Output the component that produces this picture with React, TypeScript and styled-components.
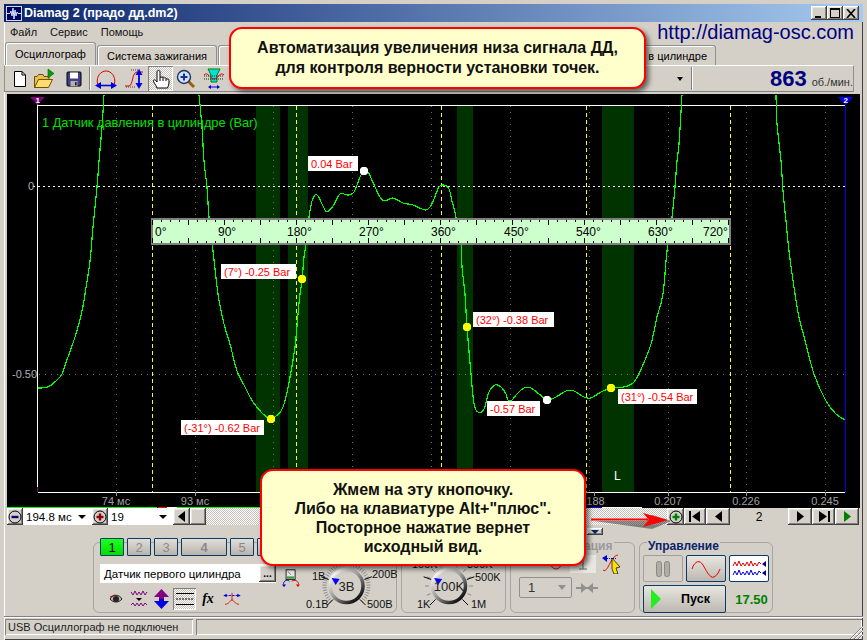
import React from "react";
import styled, { createGlobalStyle, css } from "styled-components";

const Global = createGlobalStyle`
  html, body { margin: 0; padding: 0; background: #d4d0c8; }
  body { font-family: "Liberation Sans", Arial, sans-serif; font-size: 11px; color: #000; }
`;

const raised = css`
  box-shadow: inset -1px -1px #404040, inset 1px 1px #fff, inset -2px -2px #808080, inset 2px 2px #e8e6e0;
`;
const sunken = css`
  box-shadow: inset 1px 1px #808080, inset -1px -1px #fff;
`;
const checker = css`
  background: repeating-conic-gradient(#fff 0 25%, #c4c0b8 0 50%) 0 0 / 2px 2px;
`;

const Window = styled.div`
  position: relative; width: 867px; height: 640px; box-sizing: border-box; overflow: hidden;
  display: flex; flex-direction: column; background: #d4d0c8; border: 4px solid #d4d0c8;
  border-bottom: 0;
  box-shadow: inset 1px 1px #fff, inset -1px -1px #404040;
`;
const TitleBar = styled.div`
  height: 18px; flex: none; display: flex; align-items: center; padding: 0 2px;
  background: linear-gradient(90deg, #0a246a, #a6caf0);
  color: #fff; font-weight: bold; font-size: 12.5px;
`;
const TitleText = styled.span`margin-left: 2px; flex: 1; white-space: nowrap;`;
const CaptionBtn = styled.div<{ $mr?: number }>`
  width: 16px; height: 14px; ${raised}; background: #d4d0c8; display: flex; align-items: center; justify-content: center;
  margin-right: ${p => p.$mr ?? 0}px;
`;
const MenuBar = styled.div`
  height: 20px; flex: none; display: flex; align-items: center; padding-left: 6px; gap: 13px; position: relative;
`;
const MenuItem = styled.span`font-size: 11px; color: #111;`;
const Url = styled.span`
  margin-left: auto; margin-right: 9px; font-size: 20px; color: #000080; white-space: nowrap;
`;
const TabRow = styled.div`height: 23px; flex: none; display: flex; align-items: flex-end; padding-left: 1px;`;
const Tab = styled.div<{ $w: number; $active?: boolean; $end?: boolean }>`
  width: ${p => p.$w}px; box-sizing: border-box; height: ${p => (p.$active ? 23 : 20)}px;
  margin-right: 1px; padding-right: ${p => (p.$end ? 8 : 0)}px; display: flex; align-items: center; justify-content: ${p => (p.$end ? "flex-end" : "center")};
  background: #d4d0c8; border: 1px solid #909090; border-bottom: 0; border-radius: 3px 3px 0 0;
  box-shadow: inset 1px 1px #fff; font-size: 11px; white-space: nowrap; overflow: hidden;
`;
const Toolbar = styled.div`
  height: 27px; width: 850px; flex: none; box-sizing: border-box; display: flex; align-items: center;
  padding-left: 2px; border: 1px solid #909090; border-top-color: #fff; border-bottom: 1px solid #808080;
`;
const ToolBtn = styled.div<{ $ml?: number; $on?: boolean }>`
  width: 25px; height: 25px; flex: none; margin-left: ${p => p.$ml ?? 0}px;
  display: flex; align-items: center; justify-content: center;
  ${p => p.$on && css`${checker}; box-shadow: inset 1px 1px #808080, inset -1px -1px #fff;`}
`;
const ToolSep = styled.div<{ $ml: number; $mr?: number }>`
  width: 2px; height: 23px; flex: none; background: linear-gradient(90deg, #808080 50%, #fff 50%);
  margin-left: ${p => p.$ml}px; margin-right: ${p => p.$mr ?? 0}px;
`;
const Caret = styled.span`
  margin-left: auto; width: 0; height: 0; border: 3px solid transparent; border-top: 4px solid #000; border-bottom: 0; margin-right: 8px;
`;
const RpmBox = styled.div`
  width: 160px; flex: none; display: flex; align-items: baseline; justify-content: flex-end;
`;
const RpmValue = styled.b`font-size: 22px; color: #000080; margin-right: 5px;`;
const RpmUnit = styled.span`font-size: 11px; color: #333;`;

const ChartWrap = styled.div`
  flex: none; height: 414px; margin: 2px 0 0 3px; width: 853px; background: #000;
`;
const ChartSvg = styled.svg`display: block; font-family: "Liberation Sans", Arial, sans-serif;`;
const ChartText = styled.text<{ $c: string; $s?: number }>`
  fill: ${p => p.$c}; font-size: ${p => p.$s ?? 11}px;
`;

const ScrollRow = styled.div`
  height: 18px; flex: none; margin-left: 3px; width: 855px; display: flex; align-items: stretch;
`;
const NavBtn = styled.div<{ $w: number }>`
  width: ${p => p.$w}px; height: 17px; flex: none; background: #d4d0c8; ${raised};
  display: flex; align-items: center; justify-content: center;
`;
const Combo = styled.div<{ $w: number }>`
  width: ${p => p.$w}px; height: 17px; flex: none; box-sizing: border-box; background: #fff; display: flex; align-items: center;
  padding: 0 6px 0 3px; font-size: 11.5px; justify-content: space-between;
`;
const ComboCaret = styled.span`
  width: 0; height: 0; border: 4px solid transparent; border-top: 4px solid #000; border-bottom: 0;
`;
const Track = styled.div<{ $w: number }>`
  width: ${p => p.$w}px; height: 17px; flex: none; ${checker};
`;
const PageField = styled.div`
  width: 58px; height: 17px; flex: none; display: flex; align-items: center; justify-content: center; font-size: 12px; background: #d4d0c8;
`;
const Collapse = styled.div`
  position: absolute; left: 583px; top: 524px; width: 16px; height: 7px; ${raised}; background: #d4d0c8;
  display: flex; align-items: center; justify-content: center;
`;

const Panel = styled.div`
  height: 90px; flex: none; box-sizing: border-box; display: flex; gap: 4px; padding: 16px 0 3px 89px; align-items: stretch;
`;
const Group = styled.div<{ $w: number; $row?: boolean }>`
  width: ${p => p.$w}px; box-sizing: border-box; flex: none; border: 1px solid #a8a4a0; border-radius: 6px;
  display: flex; flex-direction: ${p => (p.$row ? "row" : "column")};
`;
const Legend = styled.div<{ $muted?: boolean }>`
  align-self: flex-start; height: 14px; line-height: 14px; margin: -4px 0 0 7px; padding: 0 1px; background: #d4d0c8;
  font-weight: bold; font-size: 12px; color: ${p => (p.$muted ? "#9a9a9a" : "#0a246a")};
`;
const ChannelCol = styled.div`width: 211px; flex: none; padding-left: 6px; box-sizing: border-box;`;
const ChannelRow = styled.div`display: flex; gap: 3px; margin-top: -5px; height: 18px;`;
const ChannelBtn = styled.div<{ $w?: number; $on?: boolean }>`
  width: ${p => p.$w ?? 24}px; height: 18px; box-sizing: border-box; flex: none;
  display: flex; align-items: center; justify-content: center; font-size: 13px;
  border: 1px solid #0a3a6a; border-radius: 1px;
  color: ${p => (p.$on ? "#000" : "#8a8a8a")};
  background: ${p => (p.$on ? "linear-gradient(#22ff22, #00dd00)" : "linear-gradient(#e0ded8, #b8b4ac)")};
`;
const NameField = styled.div`
  margin-top: 8px; width: 176px; height: 19px; background: #fff; box-sizing: border-box; padding-left: 4px;
  display: flex; align-items: center; justify-content: space-between; font-size: 11.5px;
`;
const DotsBtn = styled.div`
  width: 17px; height: 17px; ${raised}; background: #d4d0c8; display: flex; align-items: center; justify-content: center;
  font-size: 10px; font-weight: bold; line-height: 8px;
`;
const IconRow = styled.div`display: flex; align-items: center; margin-top: 5px; padding-left: 6px; height: 22px;`;
const SmallIcon = styled.div<{ $w: number; $on?: boolean; $ml?: number }>`
  width: ${p => p.$w}px; height: 22px; flex: none; display: flex; align-items: center; justify-content: center;
  margin-left: ${p => p.$ml ?? 0}px;
  ${p => p.$on && css`${checker}; box-shadow: inset 1px 1px #808080, inset -1px -1px #fff;`}
`;
const FxGlyph = styled.i`font-family: "Liberation Serif", serif; font-weight: bold; font-size: 14px;`;
const ChanIcon = styled.div`
  position: absolute; left: 278px; top: 564px; width: 18px; height: 20px;
`;
const KnobBox = styled.svg`display: block; flex: none; align-self: flex-end; font-family: "Liberation Sans", Arial, sans-serif;`;
const SyncIcons = styled.div`display: flex; align-items: center; justify-content: flex-end; padding-right: 12px; height: 21px; gap: 6px;`;
const SyncRow = styled.div`display: flex; align-items: center; margin: 3px 0 0 8px; gap: 4px;`;
const DisabledCombo = styled.div`
  width: 53px; height: 21px; box-sizing: border-box; border: 1px solid #909090; border-radius: 2px; display: flex; align-items: center;
  justify-content: space-between; padding: 0 5px 0 8px; font-size: 13px; color: #333;
`;
const GreyCaret = styled.span`width: 0; height: 0; border: 4px solid transparent; border-top: 5px solid #909090; border-bottom: 0;`;
const CtlGrid = styled.div`
  display: grid; grid-template-columns: 40px 40px 40px; gap: 3px; padding-left: 3px; margin-top: 2px;
`;
const CtlBtn = styled.div<{ $span?: number; $flat?: boolean; $white?: boolean; $h: number }>`
  grid-column: span ${p => p.$span ?? 1}; height: ${p => p.$h}px; box-sizing: border-box;
  display: flex; align-items: center; justify-content: center; border-radius: 2px;
  border: 1px solid ${p => (p.$flat ? "#a0a0a0" : "#0a3a6a")};
  background: ${p => (p.$white ? "#fff" : p.$flat ? "#d4d0c8" : "linear-gradient(#e8e6e0, #bcb8b0)")};
`;
const StartLabel = styled.b`font-size: 12.5px; margin-left: 20px; margin-right: 8px;`;
const Elapsed = styled.b`align-self: center; justify-self: center; font-size: 13px; color: #008000; padding-left: 5px;`;

const StatusBar = styled.div`
  flex: 1; display: flex; gap: 3px; padding: 2px 1px 5px 1px; border-top: 1px solid #808080; box-shadow: inset 0 1px #fff; position: relative;
`;
const StatusCell = styled.div<{ $w?: number }>`
  ${p => (p.$w ? `width: ${p.$w}px; flex: none;` : "flex: 1;")} box-sizing: border-box; ${sunken};
  display: flex; align-items: center; padding-left: 3px; font-size: 11px; color: #222; white-space: nowrap;
`;
const Grip = styled.svg`position: absolute; right: 0; bottom: 1px;`;

const Callout = styled.div<{ $x: number; $y: number; $w: number; $h: number; $r: number }>`
  position: absolute; left: ${p => p.$x - 4}px; top: ${p => p.$y - 4}px; width: ${p => p.$w}px; height: ${p => p.$h}px;
  box-sizing: border-box; background: #ffffcc; border: 2px solid #ff0000; border-radius: ${p => p.$r}px;
  box-shadow: 3px 3px 5px rgba(0,0,0,.55);
  display: flex; flex-direction: column; align-items: center; justify-content: center;
  text-align: center; font-size: 16px; font-weight: bold; color: #111; white-space: nowrap;
`;
const CalloutLine = styled.div<{ $lh: number }>`line-height: ${p => p.$lh}px;`;
const ArrowSvg = styled.svg`position: absolute; left: 580px; top: 500px;`;

const smooth = (s: string) => {
  const pts = s.split(" ").map(p => p.split(",").map(Number));
  let d = `M${pts[0][0]} ${pts[0][1]}`;
  for (let i = 0; i < pts.length - 1; i++) {
    const a = pts[Math.max(i - 1, 0)], b = pts[i], c = pts[i + 1], e = pts[Math.min(i + 2, pts.length - 1)];
    d += `C${b[0] + (c[0] - a[0]) / 6} ${b[1] + (c[1] - a[1]) / 6} ${c[0] - (e[0] - b[0]) / 6} ${c[1] - (e[1] - b[1]) / 6} ${c[0]} ${c[1]}`;
  }
  return d;
};
const curveA = smooth("38,389 48,388 57,381 62,375 68,358 76,335 82,312 85,295 90,262 93,228 97,188 99,162 102,128 104,96");
const curveB = smooth("199,96 202,128 204,162 207,188 209,218 213,252 218,295 224,325 230,345 237,372 245,388 253,403 263,415 271,420 275,418 281,412 285,402 290,378 295,348 298,315 300,295 302,282 304,258 306,245 309,218 312,202 315,196 318,197 323,207 327,213 333,207 340,195 348,196 354,193 360,178 364,172 368,173 375,188 380,198 385,202 393,199 403,204 413,206 425,211 430,208 434,200 439,188 444,186 449,190 452,202 456,218 461,245 462,268 465,295 467,328 471,375 474,405 478,413 484,410 489,393 495,386 501,388 506,395 508,401 512,401 517,395 524,389 531,389 539,395 547,401 556,398 566,392 574,392 584,398 591,399 601,393 611,389 624,388 634,383 642,368 651,345 657,318 663,295 667,252 672,218 675,188 677,162 679,145 682,96");
const curveC = smooth("776,96 777,125 781,162 783,192 786,222 789,252 795,295 799,318 806,345 814,375 826,402 836,415 845,421");

const gridX = [116.5, 195, 273.5, 352, 431, 510.5, 589, 668, 746.5, 825.5];
const yellowX = [152.5, 296.5, 441.5, 586.5, 730.5];
const bands: [number, number][] = [[256, 24], [288, 20], [457, 16], [602, 32]];
const rulerLabels: [string, number][] = [["0°", 155], ["90°", 218], ["180°", 287], ["270°", 359], ["360°", 431], ["450°", 504], ["540°", 576], ["630°", 648], ["720°", 703]];
const xLabels: [string, number][] = [["74 мс", 116], ["93 мс", 195], [".188", 594], ["0.207", 668], ["0.226", 746], ["0.245", 825]];
const tips: [string, number, number, number][] = [
  ["0.04 Bar", 308, 157, 50], ["(7°) -0.25 Bar", 221, 265, 75], ["-0.57 Bar", 487, 402, 53],
  ["(32°) -0.38 Bar", 473, 313, 81], ["(31°) -0.54 Bar", 618, 390, 79], ["(-31°) -0.62 Bar", 181, 421, 83],
];
const dots: [number, number, string][] = [[302, 280, "#ffff00"], [364, 172, "#fff"], [271, 420, "#ffff00"], [467, 328, "#ffff00"], [611, 389, "#ffff00"], [547, 401, "#fff"]];

const Chart = () => (
  <ChartWrap>
    <ChartSvg width={853} height={414} viewBox="7 95 853 414">
      {bands.map(([x, w]) => <rect key={x} x={x} y={106} width={w} height={387} fill="#003300" />)}
      <g shapeRendering="crispEdges">
        {gridX.map(x => <line key={x} x1={x} x2={x} y1={107} y2={493} stroke="#6a6a6a" strokeDasharray="1 5" />)}
        {yellowX.map(x => <line key={x} x1={x} x2={x} y1={107} y2={493} stroke="#ffff00" strokeDasharray="4 3" />)}
        <line x1={33} x2={845} y1={375.5} y2={375.5} stroke="#777" strokeDasharray="1 5" />
        <line x1={33} x2={845} y1={187.5} y2={187.5} stroke="#fff" strokeDasharray="2 3" />
        <line x1={37.5} x2={845} y1={106.5} y2={106.5} stroke="#fff" />
        <line x1={37.5} x2={845} y1={493.5} y2={493.5} stroke="#fff" />
        <line x1={37.5} x2={37.5} y1={104} y2={493} stroke="#fff" />
        <line x1={845.5} x2={845.5} y1={104} y2={493} stroke="#0000ff" />
        <line x1={37.5} x2={37.5} y1={488} y2={493} stroke="#800080" />
        {xLabels.map(([, x]) => <line key={x} x1={x} x2={x} y1={493} y2={497} stroke="#999" />)}
        <rect x={7} y={508} width={150} height={1} fill="#00ff00" />
        <rect x={158} y={508} width={9} height={1} fill="#ff0000" />
        <rect x={167} y={508} width={10} height={1} fill="#fff" />
        <rect x={177} y={508} width={83} height={1} fill="#00ff00" />
        <rect x={590} y={508} width={12} height={1} fill="#0000ff" />
        <rect x={602} y={508} width={40} height={1} fill="#fff" />
      </g>
      <g fill="none" stroke="#00ff00" strokeWidth={1.2} shapeRendering="crispEdges">
        <path d={curveA} />
        <path d={curveB} />
        <path d={curveC} />
      </g>
      <polygon points="30,98 45,98 39,104 37.5,106 36,104" fill="#800080" />
      <ChartText $c="#fff" $s={8} x={35.5} y={104} fontWeight="bold">1</ChartText>
      <polygon points="838,98 853,98 846,106" fill="#0000ff" />
      <ChartText $c="#fff" $s={8} x={843.5} y={104} fontWeight="bold">2</ChartText>
      <ChartText $c="#00e000" $s={12.8} x={42} y={128}>1 Датчик давления в цилиндре (Bar)</ChartText>
      <ChartText $c="#b0b0b0" $s={11} x={28} y={191}>0</ChartText>
      <ChartText $c="#b0b0b0" $s={11} x={12} y={379}>-0.50</ChartText>
      {xLabels.map(([t, x]) => <ChartText key={t} $c="#a0a0a0" x={x} y={506} textAnchor="middle">{t}</ChartText>)}
      <ChartText $c="#fff" $s={12} x={614} y={481}>L</ChartText>

      <rect x={152} y={220} width={578} height={25} fill="#ccffcc" stroke="#808080" strokeWidth={2} />
      <g shapeRendering="crispEdges" stroke="#000">
        {Array.from({ length: 65 }, (_, i) => {
          const x = 152.5 + i * 9;
          const l = i % 4 === 0 ? 5 : 2;
          return (
            <g key={i}>
              <line x1={x} x2={x} y1={221} y2={221 + l} />
              <line x1={x} x2={x} y1={244} y2={244 - l} />
            </g>
          );
        })}
      </g>
      {rulerLabels.map(([t, x]) => <ChartText key={t} $c="#000" $s={12} x={x} y={237}>{t}</ChartText>)}

      {tips.map(([t, x, y, w]) => (
        <g key={t}>
          <rect x={x} y={y} width={w} height={15} fill="#fff" />
          <ChartText $c="#ff0000" x={x + 3} y={y + 11.5}>{t}</ChartText>
        </g>
      ))}
      {dots.map(([x, y, c]) => (
        <polygon key={x} fill={c} points={`${x - 2},${y - 4} ${x + 2},${y - 4} ${x + 4},${y - 2} ${x + 4},${y + 2} ${x + 2},${y + 4} ${x - 2},${y + 4} ${x - 4},${y + 2} ${x - 4},${y - 2}`} />
      ))}
    </ChartSvg>
  </ChartWrap>
);

const Tri = ({ d, c = "#000" }: { d: "l" | "r"; c?: string }) => (
  <svg width="9" height="11" viewBox="0 0 9 11"><polygon points={d === "l" ? "8,0 8,11 1,5.5" : "1,0 1,11 8,5.5"} fill={c} /></svg>
);
const EndTri = ({ d }: { d: "l" | "r" }) => (
  <svg width="12" height="11" viewBox="0 0 12 11">
    {d === "l" ? <><rect x="0" y="0" width="2" height="11" /><polygon points="11,0 11,11 3,5.5" /></> : <><polygon points="1,0 1,11 9,5.5" /><rect x="10" y="0" width="2" height="11" /></>}
  </svg>
);
const Round = ({ kind, c }: { kind: "+" | "-"; c: string }) => (
  <svg width="14" height="14" viewBox="0 0 14 14">
    <circle cx="7" cy="7" r="6" fill="#d4d0c8" stroke="#000" />
    <rect x="3.5" y="5.8" width="7" height="2.4" fill={c} />
    {kind === "+" && <rect x="5.8" y="3.5" width="2.4" height="7" fill={c} />}
  </svg>
);

const Knob = ({ w, cx, label, labels, dense, angle }: { w: number; cx: number; label: string; labels: [string, number, number][]; dense: boolean; angle: number }) => {
  const cy = 30;
  const n = dense ? 40 : 12;
  const a = (angle * Math.PI) / 180;
  const px = cx + 12 * Math.cos(a), py = cy + 12 * Math.sin(a);
  return (
    <KnobBox width={w} height={56} viewBox={`0 0 ${w} 56`}>
      <defs>
        <linearGradient id={`rim${cx}`} x1="0.15" y1="0.1" x2="0.85" y2="0.9">
          <stop offset="0" stopColor="#f4f4f4" />
          <stop offset="0.45" stopColor="#a0a0a0" />
          <stop offset="1" stopColor="#101010" />
        </linearGradient>
      </defs>
      {Array.from({ length: n + 1 }, (_, i) => {
        const t = ((135 + (270 * i) / n) * Math.PI) / 180;
        return <line key={i} x1={cx + 20 * Math.cos(t)} y1={cy + 20 * Math.sin(t)} x2={cx + 24 * Math.cos(t)} y2={cy + 24 * Math.sin(t)} stroke="#8a8a8a" />;
      })}
      {[135, 200, 340, 45].map(d => {
        const t = (d * Math.PI) / 180;
        return <line key={d} x1={cx + 19 * Math.cos(t)} y1={cy + 19 * Math.sin(t)} x2={cx + 27 * Math.cos(t)} y2={cy + 27 * Math.sin(t)} stroke="#000" />;
      })}
      <circle cx={cx} cy={cy} r={16.5} fill="#d4d0c8" stroke={`url(#rim${cx})`} strokeWidth={3.5} />
      <polygon points={`${px - 4},${py - 3} ${px + 4},${py - 2} ${px},${py + 4}`} fill="#0000ff" />
      <ChartText $c="#222" $s={13} x={cx} y={cy + 5} textAnchor="middle">{label}</ChartText>
      {labels.map(([t, x, y]) => <ChartText key={t} $c="#111" $s={11} x={x} y={y}>{t}</ChartText>)}
    </KnobBox>
  );
};

export default function App() {
  return (
    <>
      <Global />
      <Window>
        <TitleBar>
          <svg width="16" height="15" viewBox="0 0 16 15">
            <rect x=".5" y=".5" width="15" height="14" fill="#000060" stroke="#d0d8f0" />
            <path d="M1 7.500H4L5 5 6 10 7 2 8 13 9 4 10 10 11 6 12 7.500H15" stroke="#cfe4ff" fill="none" />
          </svg>
          <TitleText>Diamag 2 (прадо дд.dm2)</TitleText>
          <CaptionBtn>
            <svg width="10" height="9" viewBox="0 0 10 9"><rect x="1" y="7" width="6" height="2" /></svg>
          </CaptionBtn>
          <CaptionBtn>
            <svg width="11" height="10" viewBox="0 0 11 10"><rect x="0.5" y="1.5" width="9" height="8" fill="none" stroke="#000" /><rect x="0" y="0" width="10" height="2" /></svg>
          </CaptionBtn>
          <CaptionBtn $mr={2}>
            <svg width="10" height="9" viewBox="0 0 10 9"><path d="M1 0L9 9M9 0L1 9" stroke="#000" strokeWidth="1.6" /></svg>
          </CaptionBtn>
        </TitleBar>
        <MenuBar>
          <MenuItem>Файл</MenuItem>
          <MenuItem>Сервис</MenuItem>
          <MenuItem>Помощь</MenuItem>
          <Url>http://diamag-osc.com</Url>
        </MenuBar>
        <TabRow>
          <Tab $w={91} $active>Осциллограф</Tab>
          <Tab $w={120}>Система зажигания</Tab>
          <Tab $w={327} />
          <Tab $w={170} $end>в цилиндре</Tab>
        </TabRow>
        <Toolbar>
          <ToolBtn>
            <svg width="16" height="18" viewBox="0 0 16 18"><path d="M2.500 1.500H10L13.500 5V16.500H2.500Z" fill="#fff" stroke="#000" /><path d="M10 1.500V5H13.500" fill="none" stroke="#000" /></svg>
          </ToolBtn>
          <ToolBtn>
            <svg width="24" height="20" viewBox="0 0 24 20">
              <path d="M1.500 18.500V7.500H4L5.500 5.500H10L11 7.500H16V11" fill="#e8c050" stroke="#705000" />
              <path d="M1.500 18.500L5.500 10.500H19.500L15.500 18.500Z" fill="#ffdc70" stroke="#705000" />
              <polygon points="15,0 21,4.500 15,9" fill="#00a000" stroke="#006000" strokeWidth=".6" />
            </svg>
          </ToolBtn>
          <ToolBtn $ml={4}>
            <svg width="16" height="16" viewBox="0 0 16 16">
              <rect x="1" y="1" width="14" height="14" rx="1" fill="#40408a" stroke="#000" />
              <rect x="4" y="1.500" width="8" height="6" fill="#fff" />
              <rect x="4.500" y="10" width="7" height="5" fill="#b0b0b0" />
              <rect x="9" y="11" width="1.600" height="3.400" fill="#222" />
            </svg>
          </ToolBtn>
          <ToolSep $ml={3} $mr={2} />
          <ToolBtn>
            <svg width="22" height="20" viewBox="0 0 22 20">
              <path d="M2.500 15C1 7 6 2 11 2S21 7 19.500 15" fill="none" stroke="#e00000" />
              <path d="M2 16.500H20" stroke="#0000e0" strokeWidth="1.600" />
              <polygon points="0,16.500 6,13 6,20" fill="#0000e0" />
              <polygon points="22,16.500 16,13 16,20" fill="#0000e0" />
            </svg>
          </ToolBtn>
          <ToolBtn $ml={4}>
            <svg width="22" height="20" viewBox="0 0 22 20">
              <path d="M1 17H5C9 17 8 3 13 3H19" fill="none" stroke="#e00000" />
              <path d="M7 1H16M2 18H12" stroke="#444" strokeDasharray="1 1" />
              <path d="M15 4V15" stroke="#0000e0" strokeWidth="1.800" />
              <polygon points="15,0 11.500,6 18.500,6" fill="#0000e0" />
              <polygon points="15,20 11.500,14 18.500,14" fill="#0000e0" />
            </svg>
          </ToolBtn>
          <ToolBtn $ml={1} $on>
            <svg width="18" height="20" viewBox="0 0 18 20">
              <path d="M5 19C4 16 1 13 1.500 11.500 2 10 3.500 11 5 13V3C5 .8 8 .8 8 3V8L10 8.200C12 7.800 12 8.500 12.500 9 14.500 8.800 14.500 9.500 15 10 17 10 17 11 17 13 17 16 16 17.500 15.500 19Z" fill="#fff" stroke="#000" />
              <path d="M8 8V12M11 8.500V12M14 9.500V12" stroke="#000" />
            </svg>
          </ToolBtn>
          <ToolBtn>
            <svg width="20" height="20" viewBox="0 0 20 20">
              <path d="M12 12L18 18" stroke="#a06000" strokeWidth="3" />
              <circle cx="8" cy="8" r="6.500" fill="#cce4ff" stroke="#203060" strokeWidth="1.400" />
              <path d="M4.500 8H11.500M8 4.500V11.500" stroke="#203090" strokeWidth="2" />
            </svg>
          </ToolBtn>
          <ToolBtn $ml={3}>
            <svg width="22" height="21" viewBox="0 0 22 21">
              <path d="M5 1H17L14 7V14H8V7Z" fill="#00e0e0" stroke="#008000" />
              <path d="M1 7C5 3 7 11 11 11S17 3 21 7" fill="none" stroke="#e00000" />
              <path d="M1 8H21M1 11H21" stroke="#222" strokeDasharray="1 1" />
              <path d="M6 19H16" stroke="#0000e0" />
              <polygon points="5,19 8,17 8,21" fill="#0000e0" />
              <polygon points="17,19 14,17 14,21" fill="#0000e0" />
            </svg>
          </ToolBtn>
          <Caret />
          <ToolSep $ml={0} />
          <RpmBox>
            <RpmValue>863</RpmValue>
            <RpmUnit>об./мин.</RpmUnit>
          </RpmBox>
        </Toolbar>
        <Chart />
        <ScrollRow>
          <NavBtn $w={16}><Round kind="-" c="#000080" /></NavBtn>
          <Combo $w={69}>194.8 мс<ComboCaret /></Combo>
          <NavBtn $w={16}><Round kind="+" c="#900000" /></NavBtn>
          <Combo $w={65}>19<ComboCaret /></Combo>
          <NavBtn $w={17}><Tri d="l" /></NavBtn>
          <NavBtn $w={16} />
          <Track $w={461} />
          <NavBtn $w={17}><Round kind="+" c="#008000" /></NavBtn>
          <NavBtn $w={22}><EndTri d="l" /></NavBtn>
          <NavBtn $w={24}><Tri d="l" /></NavBtn>
          <PageField>2</PageField>
          <NavBtn $w={24}><Tri d="r" /></NavBtn>
          <NavBtn $w={23}><EndTri d="r" /></NavBtn>
          <NavBtn $w={24}><Tri d="r" c="#008000" /></NavBtn>
        </ScrollRow>
        <Collapse>
          <svg width="8" height="4" viewBox="0 0 8 4"><polygon points="0,0 8,0 4,4" fill="#0a246a" /></svg>
        </Collapse>
        <Panel>
          <Group $w={304} $row>
            <ChannelCol>
              <ChannelRow>
                <ChannelBtn $on>1</ChannelBtn>
                <ChannelBtn>2</ChannelBtn>
                <ChannelBtn>3</ChannelBtn>
                <ChannelBtn $w={46}><b>4</b></ChannelBtn>
                <ChannelBtn>5</ChannelBtn>
                <ChannelBtn>6</ChannelBtn>
              </ChannelRow>
              <NameField>
                Датчик первого цилиндра
                <DotsBtn>...</DotsBtn>
              </NameField>
              <IconRow>
                <SmallIcon $w={20}>
                  <svg width="14" height="10" viewBox="0 0 14 10"><path d="M1 5C4 0 10 0 13 5 10 9 4 9 1 5Z" fill="#b8b0a8" stroke="#222" /><circle cx="7" cy="5" r="3" fill="#222" /><path d="M1 3L6 1" stroke="#b00000" /></svg>
                </SmallIcon>
                <SmallIcon $w={26}>
                  <svg width="18" height="18" viewBox="0 0 18 18"><path d="M1 2L3 5 5 1 7 5 9 2 11 5 13 1 15 5 17 2" fill="none" stroke="#800080" /><polygon points="6,8 12,8 9,11" /><path d="M1 15L3 13 5 16 7 13 9 16 11 13 13 16 15 13 17 15" fill="none" stroke="#800080" /></svg>
                </SmallIcon>
                <SmallIcon $w={18}>
                  <svg width="15" height="20" viewBox="0 0 15 20"><polygon points="7.500,0 15,8 10,8 10,10 5,10 5,8 0,8" fill="#800080" /><polygon points="7.500,20 15,12 10,12 10,10 5,10 5,12 0,12" fill="#0000e0" /></svg>
                </SmallIcon>
                <SmallIcon $w={23} $ml={3} $on>
                  <svg width="18" height="14" viewBox="0 0 18 14"><path d="M0 1.500H18M0 12.500H18" stroke="#000" /><path d="M0 7H18" stroke="#000" strokeDasharray="2 1" /></svg>
                </SmallIcon>
                <SmallIcon $w={24}><FxGlyph>fx</FxGlyph></SmallIcon>
                <SmallIcon $w={24}>
                  <svg width="18" height="14" viewBox="0 0 20 16"><path d="M2 4H18" stroke="#0000e0" strokeDasharray="3 1" /><polygon points="0,4 4,2 4,6" fill="#0000e0" /><polygon points="20,4 16,2 16,6" fill="#0000e0" /><path d="M10 1V10M2 14C7 14 8 9 10 9S13 14 18 14" fill="none" stroke="#e00000" /></svg>
                </SmallIcon>
              </IconRow>
            </ChannelCol>
            <Knob w={92} cx={41.5} label="3В" dense angle={205} labels={[["1В", 7, 24], ["200В", 67, 22], ["0.1В", 1, 52], ["500В", 62, 52]]} />
          </Group>
          <ChanIcon>
            <svg width="18" height="20" viewBox="0 0 22 24">
              <rect x="5" y="2" width="11" height="12" fill="#e8e8e8" stroke="#000" />
              <rect x="6" y="10" width="9" height="3" fill="#40a040" />
              <path d="M7 4L11 8" stroke="#666" />
              <path d="M9 16C6 13 1 16 2 20" fill="none" stroke="#0000c0" strokeWidth="1.200" />
              <path d="M12 16C15 13 21 16 20 20" fill="none" stroke="#e00000" strokeWidth="1.200" />
              <polygon points="0,20 5,20 2.500,23" fill="#0000c0" />
              <polygon points="17,20 22,20 19.500,23" fill="#e00000" />
            </svg>
          </ChanIcon>
          <Group $w={105} $row>
            <Knob w={103} cx={47} label="100K" dense={false} angle={205} labels={[["100K", 10, 12], ["300K", 65, 12], ["500K", 73, 25], ["1K", 15, 52], ["1M", 69, 52]]} />
          </Group>
          <Group $w={125}>
            <Legend $muted>Синхронизация</Legend>
            <SyncIcons>
              <svg width="16" height="16" viewBox="0 0 16 16"><circle cx="8" cy="8" r="5" fill="none" stroke="#e00000" /></svg>
              <svg width="26" height="18" viewBox="0 0 26 18"><rect width="26" height="18" fill="#e8e6e0" /><path d="M13 2V14M9 14H17" stroke="#666" /></svg>
              <svg width="20" height="20" viewBox="0 0 20 20"><path d="M1 16C6 20 8 2 16 1" fill="none" stroke="#e00000" /><polygon points="0,4 5,1 5,8" fill="#0000e0" /><path d="M5 4.500H14" stroke="#0000e0" strokeDasharray="1 1" /><polygon points="10,4 18,13 14,14 16,20 12,20 10,15" fill="#ffe000" stroke="#000" strokeWidth=".7" /></svg>
            </SyncIcons>
            <SyncRow>
              <DisabledCombo>1<GreyCaret /></DisabledCombo>
              <svg width="22" height="10" viewBox="0 0 22 10"><path d="M0 5H22" stroke="#909090" strokeWidth="2" /><polygon points="11,5 5,0 5,10" fill="#909090" /><polygon points="11,5 17,0 17,10" fill="#909090" /></svg>
            </SyncRow>
          </Group>
          <Group $w={134}>
            <Legend>Управление</Legend>
            <CtlGrid>
              <CtlBtn $flat $h={27}>
                <svg width="14" height="16" viewBox="0 0 14 16"><rect x="0.500" y="0.500" width="5" height="15" rx="2" fill="#b0aca4" stroke="#888" /><rect x="8.500" y="0.500" width="5" height="15" rx="2" fill="#b0aca4" stroke="#888" /></svg>
              </CtlBtn>
              <CtlBtn $h={27}>
                <svg width="30" height="20" viewBox="0 0 30 20"><path d="M1 10C4 1 9 1 12 6S19 20 23 18 28 12 29 10" fill="none" stroke="#e00000" /></svg>
              </CtlBtn>
              <CtlBtn $white $h={27}>
                <svg width="34" height="20" viewBox="0 0 34 20">
                  <path d="M1 7L3 3 5 7 7 2 9 7 11 4 13 7 15 3 17 7 19 2 21 7 23 4 25 7 27 3 29 5" fill="none" stroke="#e00000" />
                  <path d="M1 16L3 12 5 16 7 11 9 16 11 13 13 16 15 12 17 16 19 11 21 16 23 13 25 16 27 12 29 14" fill="none" stroke="#0000e0" />
                  <polygon points="34,2 30,5 34,8" fill="#000080" />
                  <polygon points="34,11 30,14 34,17" fill="#000080" />
                </svg>
              </CtlBtn>
              <CtlBtn $span={2} $h={28}>
                <svg width="10" height="20" viewBox="0 0 10 20"><polygon points="0,0 10,10 0,20" fill="#22ee22" /></svg>
                <StartLabel>Пуск</StartLabel>
              </CtlBtn>
              <Elapsed>17.50</Elapsed>
            </CtlGrid>
          </Group>
        </Panel>
        <StatusBar>
          <StatusCell $w={188}>USB Осциллограф не подключен</StatusCell>
          <StatusCell />
          <Grip width="14" height="14" viewBox="0 0 14 14">
            <path d="M14 1L1 14M14 5L5 14M14 9L9 14" stroke="#808080" />
            <path d="M14 2L2 14M14 6L6 14M14 10L10 14" stroke="#fff" />
          </Grip>
        </StatusBar>
        <Callout $x={229} $y={27} $w={417} $h={62} $r={13}>
          <CalloutLine $lh={20}>Автоматизация увеличения низа сигнала ДД,</CalloutLine>
          <CalloutLine $lh={20}>для контроля верности установки точек.</CalloutLine>
        </Callout>
        <Callout $x={260} $y={469} $w={326} $h={97} $r={13}>
          <CalloutLine $lh={19}>Жмем на эту кнопочку.</CalloutLine>
          <CalloutLine $lh={19}>Либо на клавиатуре Alt+"плюс".</CalloutLine>
          <CalloutLine $lh={19}>Посторное нажатие вернет</CalloutLine>
          <CalloutLine $lh={19}>исходный вид.</CalloutLine>
        </Callout>
        <ArrowSvg width="86" height="26" viewBox="0 0 86 26">
          <path d="M10 17H62L68 11 88 17 68 25Z" fill="#000" opacity=".4" />
          <path d="M7 14.500H64V16.500H7Z" fill="#ff0000" />
          <path d="M59 9L84 16 59 23 65 16Z" fill="#ff0000" />
        </ArrowSvg>
      </Window>
    </>
  );
}
